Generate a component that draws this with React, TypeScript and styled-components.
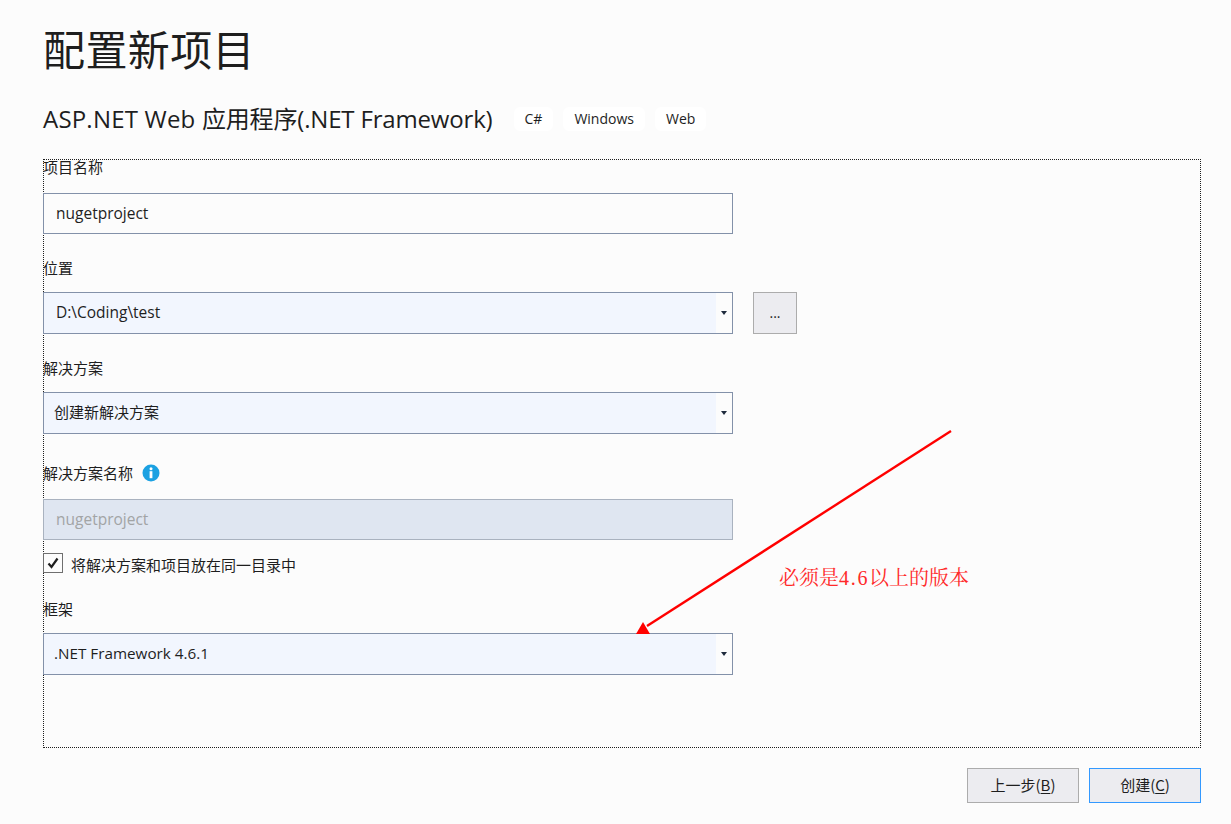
import React from "react";
import styled, { createGlobalStyle } from "styled-components";

const FONT = `"Open Sans", "Noto Sans CJK SC", sans-serif`;
const CJK = `"Noto Sans CJK SC", sans-serif`;

const Global = createGlobalStyle`
  html, body { margin: 0; padding: 0; background: #fcfcfc; }
  body { font-family: ${FONT}; color: #1e1e1e; overflow: hidden; }
`;

const Page = styled.div`
  width: 1231px;
  height: 824px;
  box-sizing: border-box;
  padding: 22px 30px 0 43px;
  display: flex;
  flex-direction: column;
  background: #fcfcfc;
`;

const Title = styled.h1`
  margin: 0;
  height: 52px;
  font: 400 42px/52px ${CJK};
  letter-spacing: 0.4px;
  color: #1e1e1e;
`;

const SubRow = styled.div`
  margin-top: 27px;
  height: 36px;
  display: flex;
  align-items: center;
`;

const SubTitle = styled.h2`
  margin: 0 21px 0 0;
  font: 400 24px/36px ${FONT};
  letter-spacing: -0.17px;
  color: #1e1e1e;
  white-space: nowrap;
`;

const SubLatin = styled.span`
  letter-spacing: 0.2px;
`;

const Tag = styled.span`
  height: 24px;
  padding: 0 11px;
  margin-right: 10px;
  border-radius: 6px;
  background: #ffffff;
  font: 400 14px/24px ${FONT};
  color: #1e1e1e;
`;

const Frame = styled.div`
  position: relative;
  margin-top: 22px;
  box-sizing: border-box;
  width: 1158px;
  height: 589px;
  border: 1px dotted #1e1e1e;
`;

const Label = styled.div<{ $top: number }>`
  margin: ${(p) => p.$top}px 0 0 -1px;
  height: 20px;
  display: flex;
  align-items: center;
  font: 400 15px/20px ${CJK};
  color: #1e1e1e;
`;

const Box = styled.div<{ $h: number; $top: number; $pad?: number }>`
  margin: ${(p) => p.$top}px 0 0 -1px;
  box-sizing: border-box;
  width: 690px;
  height: ${(p) => p.$h}px;
  padding: 0 0 2px ${(p) => p.$pad ?? 12}px;
  border: 1px solid #8391a9;
  display: flex;
  align-items: center;
  font: 400 15.5px/20px ${FONT};
  color: #1e1e1e;
`;

const DisabledBox = styled(Box)`
  background: #dfe6f1;
  border-color: #a9b2bf;
  color: #a2a4a5;
`;

const SelectBox = styled(Box)`
  position: relative;
  background: linear-gradient(to right, #f2f6fe 672px, #fcfcfc 672px);
`;

const CnText = styled.span`
  font: 400 15px/20px ${CJK};
`;

const FrameworkText = styled.span`
  font-size: 15.25px;
`;

const Caret = styled.span`
  position: absolute;
  right: 5px;
  top: 50%;
  margin-top: -2px;
  width: 0;
  height: 0;
  border-left: 3.5px solid transparent;
  border-right: 3.5px solid transparent;
  border-top: 4px solid #1e2a3c;
`;

const LocationRow = styled.div`
  display: flex;
  align-items: flex-start;
`;

const Browse = styled.div`
  margin: 14px 0 0 20px;
  box-sizing: border-box;
  width: 44px;
  height: 42px;
  background: #ececf0;
  border: 1px solid #acacac;
  display: flex;
  align-items: center;
  justify-content: center;
  font: 400 14px/20px ${FONT};
  color: #1e1e1e;
`;

const InfoIcon = styled.svg`
  width: 18px;
  height: 18px;
  margin-left: 9px;
`;

const CheckRow = styled.div`
  margin: 13px 0 0 -1px;
  height: 20px;
  display: flex;
  align-items: flex-start;
`;

const CheckBox = styled.span`
  box-sizing: border-box;
  width: 20px;
  height: 20px;
  border: 1px solid #6f6f6f;
  background: #fcfcfc;
  display: flex;
  align-items: center;
  justify-content: center;
`;

const CheckLabel = styled.span`
  margin: 2px 0 0 8px;
  font: 400 15px/20px ${CJK};
  color: #1e1e1e;
`;

const Annotation = styled.div`
  position: absolute;
  left: 735px;
  top: 405px;
  font: 400 20px/24px "Noto Serif CJK SC", "Noto Sans CJK SC", serif;
  color: #ff2a2a;
  white-space: nowrap;
`;

const AnnotationDigits = styled.span`
  font: 400 20px/24px "Liberation Serif", serif;
  letter-spacing: 1.7px;
`;

const Arrow = styled.svg`
  position: absolute;
  left: 590px;
  top: 270px;
  width: 320px;
  height: 206px;
  overflow: visible;
`;

const Footer = styled.div`
  margin-top: 20px;
  width: 1158px;
  display: flex;
  justify-content: flex-end;
  gap: 10px;
`;

const Button = styled.div<{ $primary?: boolean }>`
  box-sizing: border-box;
  width: 112px;
  height: 35px;
  padding-bottom: 2px;
  background: #ececf0;
  border: 1px solid ${(p) => (p.$primary ? "#3399ff" : "#acacac")};
  display: flex;
  align-items: center;
  justify-content: center;
  font: 400 15px/20px ${CJK};
  color: #1e1e1e;
  u { text-underline-offset: 2px; }
`;

function Select({ top, h, pad, children }: { top: number; h: number; pad?: number; children: React.ReactNode }) {
  return (
    <SelectBox $top={top} $h={h} $pad={pad}>
      {children}
      <Caret />
    </SelectBox>
  );
}

export default function App() {
  return (
    <Page>
      <Global />
      <Title>配置新项目</Title>
      <SubRow>
        <SubTitle><SubLatin>ASP.NET Web </SubLatin>应用程序(.NET Framework)</SubTitle>
        <Tag>C#</Tag>
        <Tag>Windows</Tag>
        <Tag>Web</Tag>
      </SubRow>
      <Frame>
        <Label $top={-3}>项目名称</Label>
        <Box $top={16} $h={41}>nugetproject</Box>
        <Label $top={24}>位置</Label>
        <LocationRow>
          <Select top={14} h={42}>D:\Coding\test</Select>
          <Browse>...</Browse>
        </LocationRow>
        <Label $top={24}>解决方案</Label>
        <Select top={14} h={42} pad={10}><CnText>创建新解决方案</CnText></Select>
        <Label $top={29}>
          解决方案名称
          <InfoIcon viewBox="0 0 18 18">
            <circle cx="9" cy="9" r="8.5" fill="#1ba1e2" />
            <circle cx="9" cy="4.8" r="1.5" fill="#fff" />
            <rect x="7.6" y="7.2" width="2.8" height="7" fill="#fff" />
          </InfoIcon>
        </Label>
        <DisabledBox $top={16} $h={41}>nugetproject</DisabledBox>
        <CheckRow>
          <CheckBox>
            <svg width="14" height="14" viewBox="0 0 14 14">
              <path d="M2.5 7.5 L5.5 11 L11.5 2.5" fill="none" stroke="#1e1e1e" strokeWidth="2.2" />
            </svg>
          </CheckBox>
          <CheckLabel>将解决方案和项目放在同一目录中</CheckLabel>
        </CheckRow>
        <Label $top={26}>框架</Label>
        <Select top={14} h={42} pad={10}><FrameworkText>.NET Framework 4.6.1</FrameworkText></Select>
        <Arrow viewBox="0 0 320 206">
          <line x1="317" y1="1" x2="13" y2="196" stroke="#ff0000" strokeWidth="2.4" />
          <polygon points="9,192 16,204 2,204" fill="#ff0000" />
        </Arrow>
        <Annotation>必须是<AnnotationDigits>4.6</AnnotationDigits>以上的版本</Annotation>
      </Frame>
      <Footer>
        <Button>上一步(<u>B</u>)</Button>
        <Button $primary>创建(<u>C</u>)</Button>
      </Footer>
    </Page>
  );
}
